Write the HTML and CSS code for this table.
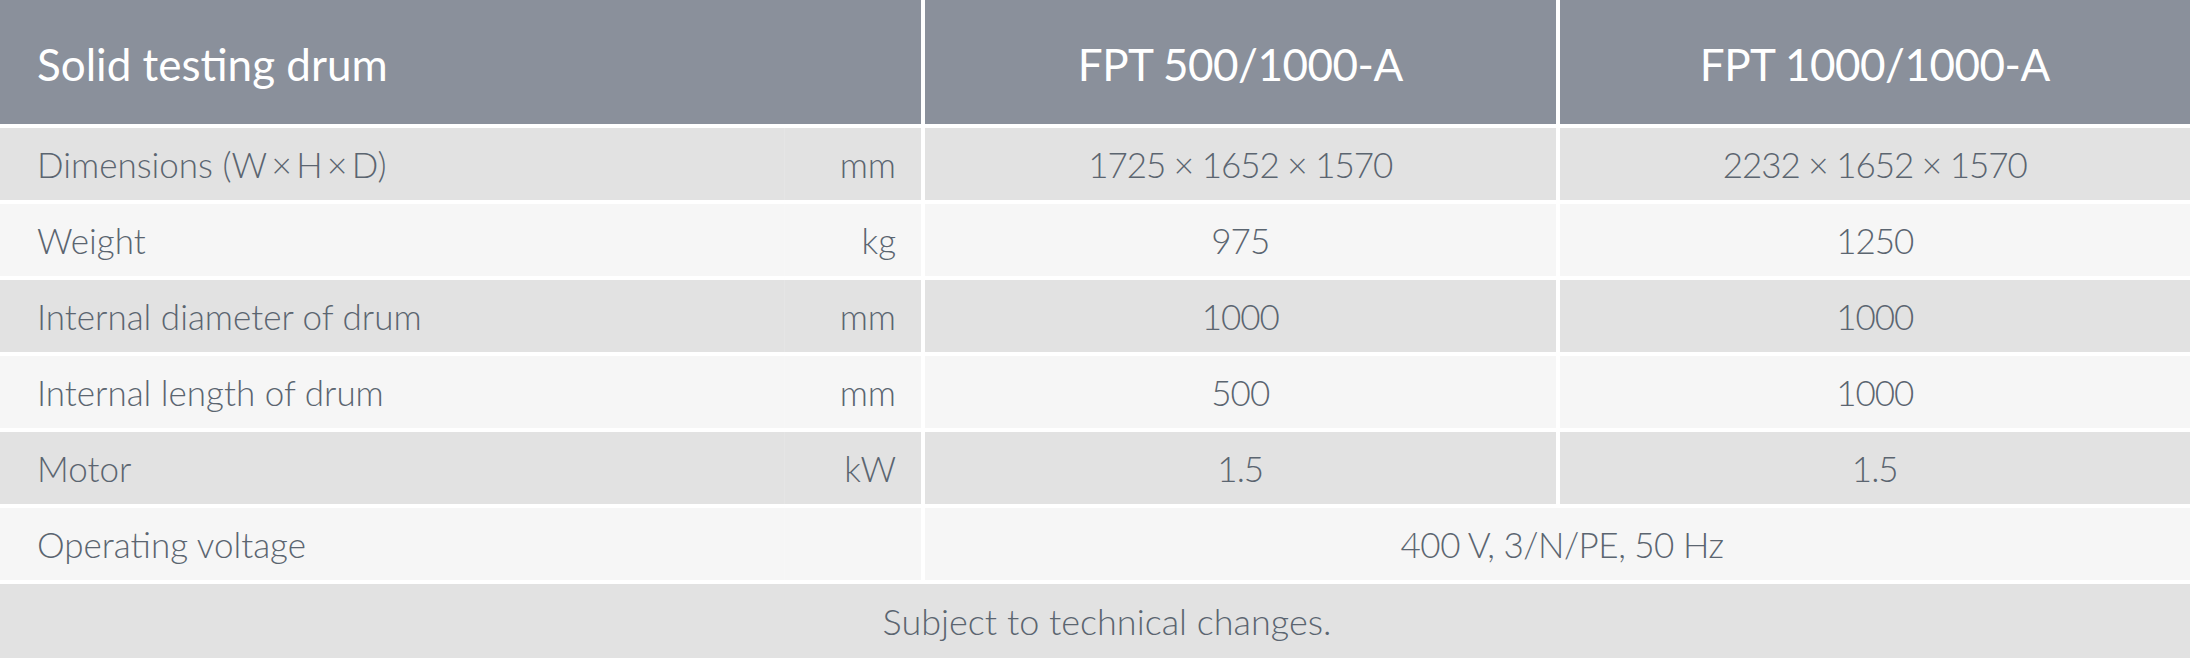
FILE: index.html
```html
<!DOCTYPE html>
<html lang="en">
<head>
<meta charset="utf-8">
<title>Solid testing drum</title>
<link rel="stylesheet" href="styles.css">
</head>
<body>
<div class="spec">
  <div class="row head">
    <div class="cell title">Solid testing drum</div>
    <div class="cell model">FPT 500/1000-A</div>
    <div class="cell model">FPT 1000/1000-A</div>
  </div>
  <div class="row dark">
    <div class="cell prop"><span class="label">Dimensions (W&#8201;×&#8201;H&#8201;×&#8201;D)</span><span class="unit">mm</span></div>
    <div class="cell val">1725 × 1652 × 1570</div>
    <div class="cell val">2232 × 1652 × 1570</div>
  </div>
  <div class="row light">
    <div class="cell prop"><span class="label">Weight</span><span class="unit">kg</span></div>
    <div class="cell val">975</div>
    <div class="cell val">1250</div>
  </div>
  <div class="row dark">
    <div class="cell prop"><span class="label">Internal diameter of drum</span><span class="unit">mm</span></div>
    <div class="cell val">1000</div>
    <div class="cell val">1000</div>
  </div>
  <div class="row light">
    <div class="cell prop"><span class="label">Internal length of drum</span><span class="unit">mm</span></div>
    <div class="cell val">500</div>
    <div class="cell val">1000</div>
  </div>
  <div class="row dark">
    <div class="cell prop"><span class="label">Motor</span><span class="unit">kW</span></div>
    <div class="cell val">1.5</div>
    <div class="cell val">1.5</div>
  </div>
  <div class="row light">
    <div class="cell prop"><span class="label">Operating voltage</span><span class="unit"></span></div>
    <div class="cell val span">400 V, 3/N/PE, 50 Hz</div>
  </div>
  <div class="foot">Subject to technical changes.</div>
</div>
</body>
</html>
```

FILE: styles.css
```css
html, body {
  margin: 0;
  padding: 0;
  background: #ffffff;
}

body {
  font-family: "Lato", "Open Sans", "Liberation Sans", sans-serif;
  color: #5b6570;
}

.spec {
  display: flex;
  flex-direction: column;
  gap: 4px;
  width: 2190px;
}

.row {
  display: grid;
  grid-template-columns: 921px 1fr 1fr;
  column-gap: 4px;
  height: 72px;
}

.row.head {
  height: 124px;
}

.cell {
  display: flex;
  align-items: center;
  font-size: 35px;
  font-weight: 300;
}

.head .cell {
  background: #8a909b;
  color: #ffffff;
  font-size: 44px;
  font-weight: 400;
  padding-top: 4px;
  box-sizing: border-box;
}

.head .title {
  padding-left: 37px;
}

.head .model {
  justify-content: center;
  letter-spacing: -0.5px;
}

.dark .cell {
  background: #e2e2e2;
}

.light .cell {
  background: #f6f6f6;
}

.prop {
  padding: 0;
}

.label {
  flex: 0 0 784px;
  box-sizing: border-box;
  padding-left: 37px;
  height: 100%;
  display: flex;
  align-items: center;
}

.unit {
  flex: 1;
  height: 100%;
  box-sizing: border-box;
  border-left: 1px solid rgba(255, 255, 255, 0.12);
  padding-right: 25px;
  display: flex;
  align-items: center;
  justify-content: flex-end;
}

.val {
  justify-content: center;
  letter-spacing: -1px;
}

.span {
  grid-column: 2 / 4;
  padding-left: 9px;
  letter-spacing: -0.5px;
}

.foot {
  height: 74px;
  background: #e2e2e2;
  display: flex;
  align-items: center;
  justify-content: center;
  padding-left: 24px;
  font-size: 36px;
  font-weight: 300;
}
```
